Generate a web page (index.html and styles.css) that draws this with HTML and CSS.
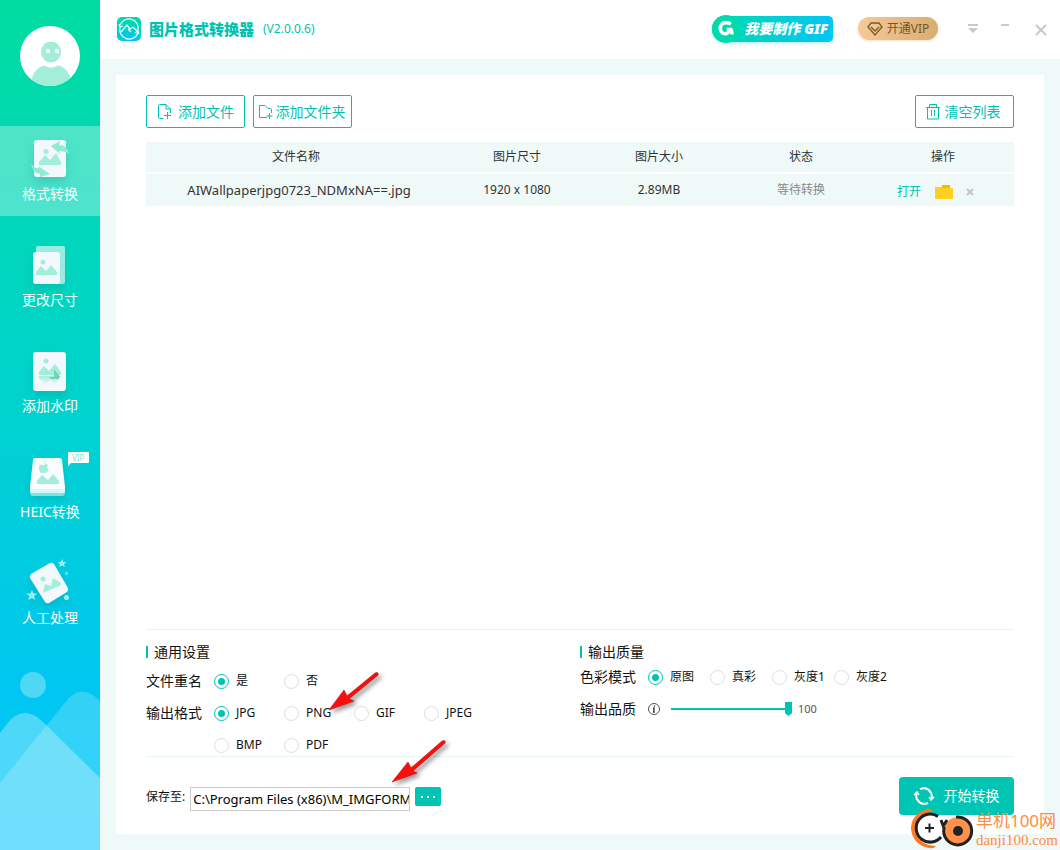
FILE: index.html
```html
<!DOCTYPE html>
<html lang="zh-CN">
<head>
<meta charset="utf-8">
<title>图片格式转换器</title>
<link rel="stylesheet" href="styles.css">
</head>
<body>
<div class="app">
  <aside class="sidebar">
    <button class="avatar" aria-label="账户">
      <svg width="60" height="60" viewBox="0 0 60 60"><defs><clipPath id="round"><circle cx="30" cy="30" r="30"/></clipPath></defs><circle cx="30" cy="30" r="30" fill="#fff"/><g clip-path="url(#round)" fill="#a2eed9"><path d="M11 60V55c2-9 7-14 13-15.500q7 4 14 0C45 41 50 47 51 55v5z"/></g><ellipse cx="31" cy="26" rx="10" ry="10.500" fill="#a2eed9"/><circle cx="28" cy="25" r="2.200" fill="#fff"/><circle cx="37" cy="25" r="2.200" fill="#fff"/></svg>
    </button>
    <nav class="nav">
      <a class="nav-item active" href="#format">
        <svg class="nav-icon" width="60" height="46" viewBox="0 0 60 46"><rect x="14" y="2" width="32" height="37" rx="3" fill="#f3f8ff"/><circle cx="26" cy="13.500" r="2.500" fill="#a2eed9"/><path d="M19 27v-3l6-7 5 5 6-7 5 9q1 3-1 3z" fill="#a2eed9"/><path d="M31 8l9-5-1 4q9 0 10 9-4-3-10-3l1 3zM11 25q3 6 8 5l-1-2 12 8-10 3v-3q-8-1-9-11z" fill="#91ead2"/></svg>
        <span>格式转换</span>
      </a>
      <a class="nav-item" href="#size">
        <svg class="nav-icon" width="60" height="46" viewBox="0 0 60 46"><rect x="16" y="2" width="29" height="38" rx="2" fill="#fff" opacity=".6"/><rect x="13" y="8" width="27" height="32" rx="3" fill="#f3f8ff"/><circle cx="23" cy="18" r="2.500" fill="#a2eed9"/><path d="M16 31v-3l5-6 5 5 5-6 6 7v3z" fill="#a2eed9"/></svg>
        <span>更改尺寸</span>
      </a>
      <a class="nav-item" href="#watermark">
        <svg class="nav-icon" width="60" height="46" viewBox="0 0 60 46"><defs><linearGradient id="reflect" x2="0" y2="1"><stop stop-color="#a2eed9"/><stop offset="1" stop-color="#f3f8ff"/></linearGradient></defs><rect x="13" y="2" width="33" height="39" rx="3" fill="#f3f8ff"/><circle cx="26" cy="11" r="2.500" fill="#a2eed9"/><path d="M19 25v-3l5-6 5 5 6-7 6 8v3z" fill="#a2eed9"/><path d="M19 26h22l-6 9-5-5-5 5-6-7z" fill="url(#reflect)"/><path d="M34 19l6 8h-6zM29 27h10v2h-8z" fill="#78cdb8"/></svg>
        <span>添加水印</span>
      </a>
      <a class="nav-item" href="#heic">
        <svg class="nav-icon" width="60" height="46" viewBox="0 0 60 46"><path d="M10 31h35v6q0 3-3 3H13q-3 0-3-3z" fill="#fff" opacity=".5"/><path d="M10 30h35v5q0 2-3 2H13q-3 0-3-2z" fill="#fff" opacity=".7"/><path d="M13 4q0-2 3-2h23q3 0 3 2l3 27q0 2-3 2H13q-3 0-3-2z" fill="#fafdff"/><path d="M17 28v-3l5-6 6 5 5-6 6 7v3z" fill="#a2eed9"/><path d="M28 9q-2-2-4 0-3-1-5 1-1 4 2 7h5l3-3q-3-2-1-5zM24 8q0-2 2-3 0 2-2 3z" fill="#a2eed9"/></svg>
        <svg class="nav-vip" width="22" height="14" viewBox="0 0 22 14"><path d="M2 0h18q1 0 1 1v9q0 1-1 1H3L0 14V1q0-1 1-1z" fill="#fff"/><text x="4" y="9" font-size="8" fill="#84dfd8">VIP</text></svg>
        <span>HEIC转换</span>
      </a>
      <a class="nav-item" href="#manual">
        <svg class="nav-icon" width="60" height="46" viewBox="0 0 60 46"><path d="M11 12L30 1q2-1 4 1l14 24q1 2-1 4L29 41q-2 1-4-1L10 16q-1-2 1-4z" fill="#f3f8ff"/><circle cx="23" cy="17" r="2.500" fill="#a2eed9"/><path d="M23 31l2-9 6 2 2-8 8 5q0 2-2 3z" fill="#a2eed9"/><path d="M42-3l1.300 3h3l-2.300 2 1 3-3-1.500-3 1.500 1-3-2.300-2h3zM12 28l1.500 3.500h4L14 34l1.500 4-3.500-2-4 2 1.500-4L6 31.500h4.500z" fill="#9df0ef"/><circle cx="46.500" cy="11.500" r="1.200" fill="none" stroke="#9df0ef"/><circle cx="46.500" cy="35.500" r="2.500" fill="#9df0ef"/></svg>
        <span>人工处理</span>
      </a>
    </nav>
    <svg class="scenery" viewBox="0 0 100 180" aria-hidden="true"><circle cx="33" cy="15" r="13" fill="#fff" opacity=".3"/><path d="M0 113L68 29q14-16 32 2v149H0z" fill="#fff" opacity=".2"/><path d="M0 63L10 50q15-14 31 0l59 58v72H0z" fill="#fff" opacity=".3"/></svg>
  </aside>

  <main class="main">
    <header class="header">
      <svg width="24" height="24" viewBox="0 0 24 24"><defs><linearGradient id="logo" x2="0" y2="1"><stop stop-color="#00dba5"/><stop offset="1" stop-color="#00c4f5"/></linearGradient></defs><rect width="24" height="24" rx="5" fill="url(#logo)"/><path d="M3 8a9.500 9.500 0 0 1 18 6M21 16a9.500 9.500 0 0 1-18-6M2 7l1 3 3-1M22 17l-1-3-3 2M4 15l6-7 3 4 3-2 5 5M11 12l3 3" fill="none" stroke="#e8fffb" stroke-width="1.300"/></svg>
      <h1 class="title">图片格式转换器</h1>
      <span class="version">(V2.0.0.6)</span>
      <button class="gif-button">
        <svg width="28" height="28" viewBox="0 0 28 28"><circle cx="14" cy="14" r="14" fill="#00dbae"/><path d="M19 9q-6-3-9.500 0.500-3 5 1 8.500 4 2 6-1v-2.500h2.500q1 2 1 5" fill="none" stroke="#fff" stroke-width="3.500"/></svg>
        <span>我要制作</span><span>GIF</span>
      </button>
      <button class="vip-button">
        <svg width="16" height="14" viewBox="0 0 16 14" fill="none" stroke="#815a29" stroke-width="1.400"><path d="M4 1h8l3 4-7 8-7-8zM4 5l4 4 4-4"/></svg>
        <span>开通VIP</span>
      </button>
      <div class="window-tools">
        <button aria-label="菜单"><svg width="12" height="12" viewBox="0 0 12 12" fill="#c9c9c9"><path d="M1 1h10v2H1zM1 5h10l-5 5z"/></svg></button>
        <button aria-label="最小化"><svg width="12" height="12" viewBox="0 0 12 12" fill="#c9c9c9"><path d="M0 1h8v2H0z"/></svg></button>
        <button aria-label="关闭"><svg width="12" height="12" viewBox="0 0 12 12" fill="none" stroke="#c9c9c9" stroke-width="2"><path d="M1 2l10 10M11 2L1 12"/></svg></button>
      </div>
    </header>

    <section class="panel">
      <div class="toolbar">
        <button class="tool"><svg width="16" height="18" viewBox="0 0 16 18" fill="none" stroke="#00c2b3"><path d="M6 15.500H2.500q-1 0-1-1v-12q0-1 1-1H9L13.500 6v4M9 1.500V6h4.500M10.500 9v7M7 12.500h7"/></svg>添加文件</button>
        <button class="tool tool-folder"><svg width="16" height="18" viewBox="0 0 16 18" fill="none" stroke="#00c2b3"><path d="M9 14.500H1.500v-12H7l3 3h2.500q1 0 1 1V10M11.500 10v6M8.500 13h6"/></svg>添加文件夹</button>
        <button class="tool tool-clear"><svg width="16" height="18" viewBox="0 0 16 18" fill="none" stroke="#00c2b3"><path d="M1 4.500h14M4.500 4V1.500h7V4M2.500 5v11h11V5M6.500 7v6M9.500 7v6"/></svg>清空列表</button>
      </div>

      <table class="files">
        <thead><tr><th>文件名称</th><th>图片尺寸</th><th>图片大小</th><th>状态</th><th>操作</th></tr></thead>
        <tbody><tr>
          <td class="filename">AIWallpaperjpg0723_NDMxNA==.jpg</td><td>1920 x 1080</td><td>2.89MB</td><td class="waiting">等待转换</td>
          <td><div class="actions"><a href="#open">打开</a>
            <button aria-label="打开文件夹"><svg width="18" height="14" viewBox="0 0 18 14"><path d="M7 0h8v4H7z" fill="#f5b900"/><path d="M1 2h6l1 1h9q1 0 1 1v9q0 1-1 1H1q-1 0-1-1V3q0-1 1-1z" fill="#ffd021"/></svg></button>
            <button aria-label="移除"><svg width="6" height="6" viewBox="0 0 6 6" stroke="#c4c4c4" stroke-width="1.800"><path d="M0 0l6 6M6 0L0 6"/></svg></button></div></td>
        </tr></tbody>
      </table>

      <div class="settings">
        <section class="general">
          <h2>通用设置</h2>
          <div class="field" role="radiogroup" aria-labelledby="rename"><span class="name" id="rename">文件重名</span>
            <div class="options">
              <label><input type="radio" name="rename" checked>是</label>
              <label><input type="radio" name="rename">否</label>
            </div></div>
          <div class="field" role="radiogroup" aria-labelledby="fmt"><span class="name" id="fmt">输出格式</span>
            <div class="options">
              <label><input type="radio" name="fmt" checked>JPG</label>
              <label><input type="radio" name="fmt">PNG</label>
              <label><input type="radio" name="fmt">GIF</label>
              <label><input type="radio" name="fmt">JPEG</label>
              <label><input type="radio" name="fmt">BMP</label>
              <label><input type="radio" name="fmt">PDF</label>
            </div></div>
        </section>
        <section class="quality">
          <h2>输出质量</h2>
          <div class="field" role="radiogroup" aria-labelledby="mode"><span class="name" id="mode">色彩模式</span>
            <div class="options">
              <label><input type="radio" name="mode" checked>原图</label>
              <label><input type="radio" name="mode">真彩</label>
              <label><input type="radio" name="mode">灰度1</label>
              <label><input type="radio" name="mode">灰度2</label>
            </div></div>
          <div class="field level"><label class="name" for="level">输出品质</label>
            <svg width="12" height="12" viewBox="0 0 12 12"><circle cx="6" cy="6" r="5.500" fill="none" stroke="#555"/><path d="M6.500 2.500v1.300M5 5.200h1.200L5.600 9h1.200" fill="none" stroke="#333" stroke-width="1.300"/></svg>
            <input type="range" id="level" min="0" max="100" value="100"><output for="level">100</output></div>
        </section>
      </div>

      <footer class="footer">
        <label for="path">保存至:</label>
        <input class="path" id="path" type="text" value="C:\Program Files (x86)\M_IMGFORMAT\">
        <button class="browse" aria-label="浏览"><svg width="16" height="2" viewBox="0 0 16 2" fill="#fff"><path d="M1 0h2v2H1zM7 0h2v2H7zM13 0h2v2h-2z"/></svg></button>
        <button class="start"><svg width="20" height="20" viewBox="0 0 20 20" fill="none" stroke="#fff" stroke-width="2"><path d="M6 3.200a8 8 0 0 1 11.500 9M14 16.800a8 8 0 0 1-11.500-9M3.500 13.500A8 8 0 0 0 9 18M16.500 6.500A8 8 0 0 0 11 2"/><path d="M0 9l3-3 2 3M20 11l-3 3-2-3" stroke-width="1.500"/></svg>开始转换</button>
      </footer>
    </section>
  </main>

  <svg class="pointers" width="120" height="120" viewBox="0 0 120 120" aria-hidden="true">
    <g fill="#fb0d0d" stroke="#c01010" stroke-width=".6">
      <path d="M1 40L16 20l3 6L47 3q2-1 3 0 1 2-1 3L21 29l5 2z"/>
      <path d="M64 112l16-20 3 6 31-27q2-1 3 0 1 2-1 3L85 101l4 2z"/>
    </g>
  </svg>

  <div class="stamp">
    <svg width="64" height="42" viewBox="0 0 64 42"><path d="M22 3q-3-4-8-1Q0 7 0 21q2 16 18 19 5 1 7-2Q7 37 4 22 4 8 22 3z" fill="#ff7921"/><path d="M30 29A14 14 0 1 1 27 8.500" fill="#fff" stroke="#222" stroke-width="3"/><path d="M14 20h9M18.500 15.500v9" stroke="#222" stroke-width="2"/><circle cx="47" cy="23" r="14" fill="#ff914d"/><path d="M45 9a14 14 0 1 1-12 11l-3-8M33 17l3-5" fill="none" stroke="#222" stroke-width="3"/><circle cx="47" cy="23" r="5" fill="#222"/></svg>
    <div><p class="stamp-name">单机100网</p><p class="stamp-site">danji100.com</p></div>
  </div>
</div>
</body>
</html>
```
FILE: styles.css
```css
* { box-sizing: border-box; }

body {
  margin: 0;
  font: 12px/16px "Noto Sans", "Noto Sans CJK SC", sans-serif;
  color: #333;
}

button {
  padding: 0;
  border: 0;
  background: none;
  font: inherit;
  color: inherit;
  cursor: pointer;
}

a { text-decoration: none; }
svg { display: block; flex: none; overflow: visible; }
h1, h2, p { margin: 0; }

.app {
  position: relative;
  display: grid;
  grid-template-columns: 100px 1fr;
  min-height: 100vh;
  overflow: hidden;
}

/* Sidebar */
.sidebar {
  display: flex;
  flex-direction: column;
  align-items: center;
  padding-top: 26px;
  background: linear-gradient(#00dca0, #00d2d0 50%, #00c7f0 80%, #00c6ff);
}

.nav {
  display: flex;
  flex-direction: column;
  gap: 16px;
  width: 100%;
  margin-top: 40px;
}

.nav-item {
  position: relative;
  display: flex;
  flex-direction: column;
  align-items: center;
  height: 90px;
  padding-top: 12px;
  font-size: 14px;
  line-height: 20px;
  color: #fff;
}

.nav-item.active { background: rgba(255, 255, 255, .3); }
.nav-icon { filter: drop-shadow(0 6px 4px rgba(0, 120, 110, .2)); }
.nav-vip { position: absolute; top: 8px; right: 10px; }

.scenery { width: 100%; margin-top: auto; }

/* Header */
.main {
  display: flex;
  flex-direction: column;
  min-width: 0;
  background: #eff9f8;
}

.header {
  display: flex;
  align-items: center;
  height: 59px;
  padding: 0 13px 1px 17px;
  background: #fff;
  color: #00c2b3;
}

.title { margin-left: 8px; font-size: 15px; line-height: 20px; font-weight: 900; }
.version { margin-left: 9px; }

.gif-button {
  display: flex;
  align-items: center;
  gap: 4px;
  height: 26px;
  margin: 0 25px 1px auto;
  padding-right: 5px;
  border-radius: 14px 5px 5px 14px;
  background: linear-gradient(90deg, #00dbae, #00c6f5);
  box-shadow: 0 2px 3px #c8f4ee;
  color: #fff;
  font-size: 14px;
  font-weight: 900;
  font-style: italic;
}

.vip-button {
  display: flex;
  align-items: center;
  justify-content: center;
  gap: 4px;
  width: 80px;
  height: 23px;
  margin-bottom: 1px;
  border-radius: 12px;
  background: linear-gradient(90deg, #f4cb98, #d7ad72);
  box-shadow: 0 1px 3px #eddcc6;
  color: #785426;
}

.window-tools { display: flex; gap: 22px; margin-left: 29px; }

/* Panel */
.panel {
  display: flex;
  flex: 1;
  flex-direction: column;
  margin: 16px;
  padding: 20px 30px 19px;
  background: #fff;
}

.toolbar { display: flex; gap: 8px; }

.tool {
  display: flex;
  align-items: center;
  justify-content: center;
  gap: 5px;
  width: 99px;
  height: 33px;
  border: 1px solid #00c2b3;
  border-radius: 2px;
  font-size: 14px;
  color: #00c2b3;
}

.tool-folder { gap: 2px; padding-right: 2px; }
.tool-clear { gap: 4px; margin-left: auto; padding-right: 4px; }

.files {
  width: 100%;
  margin-top: 14px;
  border-collapse: separate;
  border-spacing: 0;
  table-layout: fixed;
  text-align: center;
}

.files th, .files td { padding: 0; background: #eff9f8; }
.files th { height: 30px; font-weight: 400; }
.files th:not(:first-child) { width: 142px; }
.files td { height: 34px; border-top: 2px solid #fff; }
.files .filename { padding-left: 6px; font-size: 13px; }
.files .waiting { color: #888; }

.actions { display: flex; align-items: center; justify-content: center; gap: 14px; padding: 3px 16px 0 0; }
.actions a { color: #00c2b3; }

/* Settings */
.settings {
  display: grid;
  grid-template-columns: 1fr 1fr;
  height: 128px;
  margin-top: auto;
  padding-top: 13px;
  border-top: 1px solid #e4f5f2;
  border-bottom: 1px solid #e4f5f2;
  color: #111;
}

.settings h2 {
  display: flex;
  align-items: center;
  gap: 6px;
  font-size: 14px;
  line-height: 18px;
  font-weight: 400;
}

.settings h2::before { content: ""; width: 2px; height: 12px; background: #00c2b3; }

.field { display: flex; align-items: flex-start; gap: 12px; }
.name { font-size: 14px; line-height: 32px; }
.general .field:first-of-type { margin-top: 4px; }

.options { display: grid; grid-template-columns: repeat(4, 70px); }
.options label { display: flex; align-items: center; gap: 7px; height: 32px; }
.quality .options { grid-template-columns: repeat(4, 62px); }
.quality .options label { white-space: nowrap; }

input[type="radio"] {
  appearance: none;
  flex: none;
  width: 15px;
  height: 15px;
  margin: 0;
  border: 1px solid #ddd;
  border-radius: 50%;
}

input[type="radio"]:checked {
  border-color: #00c2b3;
  background: radial-gradient(circle, #00c2b3 3px, #fff 4px);
}

.level { align-items: center; }

input[type="range"] {
  appearance: none;
  width: 121px;
  height: 14px;
  margin: 0 -6px 0 -1px;
  background: linear-gradient(#00c2b3, #00c2b3) center / 100% 2px no-repeat;
}

input[type="range"]::-webkit-slider-thumb {
  appearance: none;
  width: 7px;
  height: 14px;
  background: #00c2b3;
  clip-path: polygon(0 0, 100% 0, 100% 80%, 50% 100%, 0 80%);
}

.level output { font-size: 11px; color: #555; }

/* Footer */
.footer { display: flex; align-items: flex-start; gap: 5px; padding-top: 20px; color: #111; }
.footer label { margin-top: 12px; }

.path {
  width: 220px;
  height: 24px;
  margin: 10px 0 0;
  padding: 0 0 0 2px;
  border: 1px solid #ccc;
  font: inherit;
  font-size: 13px;
  color: #000;
}

.browse {
  display: flex;
  align-items: center;
  justify-content: center;
  width: 26px;
  height: 19px;
  margin-top: 10px;
  border-radius: 2px;
  background: #00c5b5;
}

.start {
  display: flex;
  align-items: center;
  justify-content: center;
  gap: 10px;
  width: 115px;
  height: 38px;
  margin-left: auto;
  border-radius: 4px;
  background: #00c5b5;
  font-size: 14px;
  color: #fff;
}

/* Overlays */
.pointers {
  position: absolute;
  bottom: 60px;
  left: 328px;
  filter: drop-shadow(3px 3px 2px rgba(0, 0, 0, .4));
  pointer-events: none;
}

.stamp {
  position: absolute;
  right: 2px;
  bottom: 0;
  display: flex;
  align-items: center;
  gap: 1px;
  color: #ff8c3d;
  pointer-events: none;
}

.stamp-name { font-size: 17px; line-height: 22px; }
.stamp-site { font: 15px/16px "Liberation Serif", serif; }
```
